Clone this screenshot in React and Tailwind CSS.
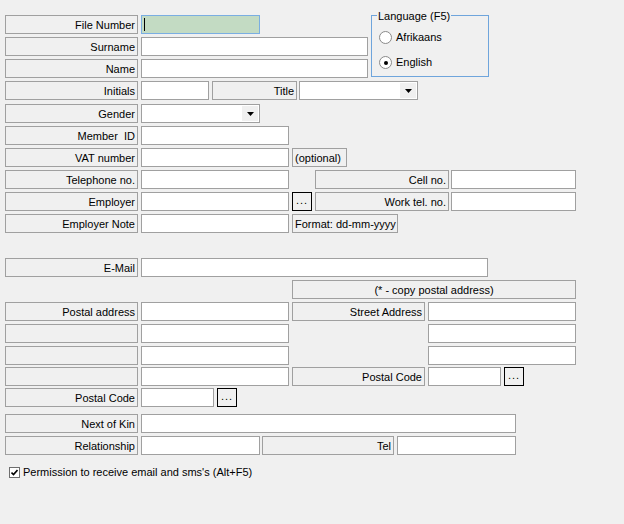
import React from 'react'

// Windows-style client capture form (Tahoma 8pt look-alike)
function Label({ w = 'w-[133px]', align = 'justify-end', children }) {
  return (
    <div className={`h-[19px] shrink-0 border border-[#a0a0a0] flex items-center ${align} pr-[2px] pl-[2px] pt-[1px] whitespace-nowrap overflow-hidden ${w}`}>
      {children}
    </div>
  )
}

function Field({ w = 'w-[148px]' }) {
  return <input readOnly className={`h-[19px] shrink-0 border border-[#a0a0a0] bg-white outline-none ${w}`} />
}

function Combo({ w = 'w-[119px]' }) {
  return (
    <div className={`h-[19px] shrink-0 border border-[#a0a0a0] bg-white flex justify-end p-[1px] ${w}`}>
      <div className="w-[16px] h-full bg-[#f0f0f0] flex items-center justify-center">
        <svg width="7" height="4" viewBox="0 0 7 4">
          <path d="M0 0H7L3.5 4Z" fill="#000" />
        </svg>
      </div>
    </div>
  )
}

function Dots({ className = '' }) {
  return (
    <div className={`h-[19px] w-[20px] shrink-0 border border-black bg-[#f0f0f0] flex items-end justify-center pb-[4px] leading-none ${className}`}>
      <span className="text-[11px] tracking-[1px]">...</span>
    </div>
  )
}

function Radio({ checked, children }) {
  return (
    <div className="flex items-center h-[13px]">
      <div className="w-[13px] h-[13px] rounded-full border border-[#8a8a8a] bg-white flex items-center justify-center">
        {checked && <div className="w-[4px] h-[4px] rounded-full bg-black" />}
      </div>
      <span className="ml-[4px]">{children}</span>
    </div>
  )
}

export default function App() {
  return (
    <div
      className="w-[624px] h-[524px] bg-[#f0f0f0] text-black text-[11px] leading-none pt-[15px] pl-[5px] overflow-hidden"
      style={{ fontFamily: '"Liberation Sans", Arial, sans-serif' }}
    >
      {/* top block with language group */}
      <div className="flex">
        <div className="flex flex-col gap-[3px]">
          <div className="flex gap-[3px]">
            <Label>File Number</Label>
            <div className="h-[19px] w-[119px] border border-[#7aaee2] bg-[#c3dbc3] flex items-center pl-[2px]">
              <div className="w-[1px] h-[13px] bg-black" />
            </div>
          </div>
          <div className="flex gap-[3px]">
            <Label>Surname</Label>
            <Field w="w-[227px]" />
          </div>
          <div className="flex gap-[3px]">
            <Label>Name</Label>
            <Field w="w-[227px]" />
          </div>
        </div>

        <div className="relative ml-[3px] w-[118px] h-[62px] border border-[#6fa5dc] pl-[7px] pt-[15px] flex flex-col gap-[12px]">
          <span className="absolute left-[5px] -top-[5px] bg-[#f0f0f0] px-[1px]">Language (F5)</span>
          <Radio>Afrikaans</Radio>
          <Radio checked>English</Radio>
        </div>
      </div>

      <div className="flex mt-[3px]">
        <Label>Initials</Label>
        <Field w="w-[68px] ml-[3px]" />
        <Label w="w-[85px] ml-[3px]">Title</Label>
        <Combo w="w-[119px] ml-[2px]" />
      </div>

      <div className="flex mt-[4px]">
        <Label>Gender</Label>
        <Combo w="w-[119px] ml-[3px]" />
      </div>

      <div className="flex flex-col gap-[3px] mt-[3px]">
        <div className="flex gap-[3px]">
          <Label>Member&nbsp; ID</Label>
          <Field />
        </div>
        <div className="flex gap-[3px]">
          <Label>VAT number</Label>
          <Field />
          <Label w="w-[55px]" align="justify-start">(optional)</Label>
        </div>
        <div className="flex">
          <Label>Telephone no.</Label>
          <Field w="w-[148px] ml-[3px]" />
          <Label w="w-[134px] ml-[26px]">Cell no.</Label>
          <Field w="w-[125px] ml-[2px]" />
        </div>
        <div className="flex">
          <Label>Employer</Label>
          <Field w="w-[148px] ml-[3px]" />
          <Dots className="ml-[3px]" />
          <Label w="w-[134px] ml-[3px]">Work tel. no.</Label>
          <Field w="w-[125px] ml-[2px]" />
        </div>
        <div className="flex gap-[3px]">
          <Label>Employer Note</Label>
          <Field />
          <Label w="w-[106px]" align="justify-start">Format: dd-mm-yyyy</Label>
        </div>
      </div>

      {/* address block */}
      <div className="flex flex-col gap-[3px] mt-[25px]">
        <div className="flex gap-[3px]">
          <Label>E-Mail</Label>
          <Field w="w-[347px]" />
        </div>
        <div className="flex pl-[287px]">
          <Label w="w-[284px]" align="justify-center">(* - copy postal address)</Label>
        </div>
        <div className="flex gap-[3px]">
          <Label>Postal address</Label>
          <Field />
          <Label>Street Address</Label>
          <Field />
        </div>
        <div className="flex">
          <Label />
          <Field w="w-[148px] ml-[3px]" />
          <Field w="w-[148px] ml-[139px]" />
        </div>
        <div className="flex">
          <Label />
          <Field w="w-[148px] ml-[3px]" />
          <Field w="w-[148px] ml-[139px]" />
        </div>
      </div>

      <div className="flex gap-[3px] mt-[2px]">
        <Label />
        <Field />
        <Label>Postal Code</Label>
        <Field w="w-[73px]" />
        <Dots />
      </div>

      <div className="flex gap-[3px] mt-[2px]">
        <Label>Postal Code</Label>
        <Field w="w-[73px]" />
        <Dots />
      </div>

      <div className="flex gap-[3px] mt-[7px]">
        <Label>Next of Kin</Label>
        <Field w="w-[375px]" />
      </div>

      <div className="flex mt-[3px]">
        <Label>Relationship</Label>
        <Field w="w-[119px] ml-[3px]" />
        <Label w="w-[132px] ml-[2px]">Tel</Label>
        <Field w="w-[119px] ml-[3px]" />
      </div>

      <div className="flex items-center mt-[12px] ml-[4px]">
        <div className="w-[11px] h-[11px] border border-[#6e6e6e] bg-white flex items-center justify-center">
          <svg width="7" height="7" viewBox="0 0 7 7">
            <path d="M0.5 3.5L2.5 5.5L6.5 1" stroke="#000" strokeWidth="1.6" fill="none" />
          </svg>
        </div>
        <span className="ml-[3px]">Permission to receive email and sms's (Alt+F5)</span>
      </div>
    </div>
  )
}
